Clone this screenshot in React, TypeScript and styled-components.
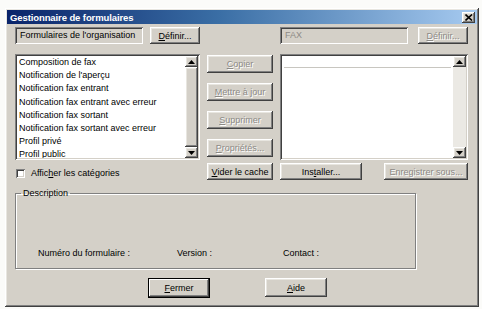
import styled, { createGlobalStyle } from "styled-components";

const GlobalStyle = createGlobalStyle`
  html, body {
    margin: 0;
    padding: 0;
    background: #fbfbf9;
  }
  body {
    font-family: "Liberation Sans", Arial, sans-serif;
    font-size: 9px;
    color: #000;
  }
`;

const raised = `
  box-shadow: inset -1px -1px #404040, inset 1px 1px #ffffff,
    inset -2px -2px #808080, inset 2px 2px #e8e6e0;
`;

const sunken = `
  box-shadow: inset 1px 1px #808080, inset -1px -1px #ffffff,
    inset 2px 2px #404040, inset -2px -2px #d4d0c8;
`;

const Page = styled.div`
  padding: 8px 3px 2px 5px;
`;

const Window = styled.div`
  width: 474px;
  height: 299px;
  box-sizing: border-box;
  background: #d4d0c8;
  padding: 2px;
  ${raised}
  display: flex;
  flex-direction: column;
`;

const TitleBar = styled.div`
  height: 14px;
  flex-shrink: 0;
  display: flex;
  align-items: center;
  justify-content: space-between;
  padding: 0 2px 0 3px;
  background: linear-gradient(90deg, #0a246a 0%, #3a6ea5 45%, #a6caf0 100%);
`;

const Title = styled.span`
  color: #fff;
  font-weight: bold;
  font-size: 9.5px;
  letter-spacing: -0.1px;
`;

const CloseButton = styled.div`
  width: 13px;
  height: 11px;
  background: #d4d0c8;
  ${raised}
  display: flex;
  align-items: center;
  justify-content: center;
`;

const Content = styled.div`
  padding: 3px 8px 0 8px;
  display: grid;
  grid-template-columns: 185px 66px 188px;
  column-gap: 7px;
  grid-template-rows: auto auto auto;
`;

const Cell = styled.div<{ $mt?: number }>`
  display: flex;
  align-items: flex-start;
  margin-top: ${(p) => p.$mt ?? 0}px;
`;

const FieldRow = styled.div`
  display: flex;
  gap: 7px;
  width: 100%;
  justify-content: space-between;
`;

const Field = styled.div<{ $disabled?: boolean }>`
  width: 128px;
  height: 17px;
  box-sizing: border-box;
  padding: 3px 5px;
  background: #d4d0c8;
  ${sunken}
  color: ${(p) => (p.$disabled ? "#8c8a86" : "#000")};
  white-space: nowrap;
`;

const Button = styled.div<{ $w?: number; $disabled?: boolean; $default?: boolean; $h?: number }>`
  width: ${(p) => p.$w ?? 66}px;
  height: ${(p) => p.$h ?? 18}px;
  box-sizing: border-box;
  flex-shrink: 0;
  display: flex;
  align-items: center;
  justify-content: center;
  background: #d4d0c8;
  white-space: nowrap;
  ${(p) =>
    p.$default
      ? `border: 1px solid #000; box-shadow: inset -1px -1px #404040, inset 1px 1px #ffffff, inset -2px -2px #808080;`
      : raised}
  color: ${(p) => (p.$disabled ? "#8c8a86" : "#000")};
  text-shadow: ${(p) => (p.$disabled ? "1px 1px #ffffff" : "none")};
  u {
    text-decoration: underline;
  }
`;

const ButtonStack = styled.div`
  display: flex;
  flex-direction: column;
  gap: 10px;
  padding-top: 1px;
`;

const ListBox = styled.div`
  width: 100%;
  height: 106px;
  box-sizing: border-box;
  padding: 2px;
  background: #fff;
  ${sunken}
  display: flex;
`;

const Items = styled.div`
  flex: 1;
  padding: 0 2px;
  overflow: hidden;
`;

const Item = styled.div`
  height: 13.2px;
  line-height: 13.2px;
  white-space: nowrap;
`;

const FocusRow = styled.div`
  height: 11px;
  border-bottom: 1px solid #c8c6c0;
`;

const ScrollBar = styled.div`
  width: 13px;
  display: flex;
  flex-direction: column;
  background: #ebe9e4;
`;

const ArrowButton = styled.div`
  height: 11px;
  flex-shrink: 0;
  background: #d4d0c8;
  ${raised}
  display: flex;
  align-items: center;
  justify-content: center;
`;

const Thumb = styled.div`
  flex: 1;
  background: #d4d0c8;
  ${raised}
`;

const Track = styled.div`
  flex: 1;
`;

const CheckRow = styled.label`
  display: flex;
  align-items: center;
  gap: 6px;
  padding: 5px 0 0 1px;
`;

const CheckBox = styled.span`
  width: 9px;
  height: 9px;
  background: #fff;
  ${sunken}
`;

const BottomRight = styled.div`
  display: flex;
  justify-content: space-between;
  width: 100%;
`;

const Group = styled.fieldset`
  margin: 8px 0 0 8px;
  width: 401px;
  height: 81px;
  box-sizing: border-box;
  border: 1px solid #808080;
  box-shadow: 1px 1px #ffffff, inset 1px 1px #ffffff;
  padding: 0 22px;
  legend {
    padding: 0 2px;
    margin-left: -17px;
  }
`;

const InfoRow = styled.div`
  display: flex;
  margin-top: 50px;
`;

const Info = styled.span<{ $w: number }>`
  width: ${(p) => p.$w}px;
`;

const Footer = styled.div`
  display: flex;
  gap: 55px;
  padding: 9px 0 0 141px;
`;

const Arrow = ({ up }: { up?: boolean }) => (
  <svg width="7" height="4" viewBox="0 0 7 4">
    <path d={up ? "M3.5 0 L7 4 L0 4 Z" : "M0 0 L7 0 L3.5 4 Z"} fill="#000" />
  </svg>
);

const items = [
  "Composition de fax",
  "Notification de l'aperçu",
  "Notification fax entrant",
  "Notification fax entrant avec erreur",
  "Notification fax sortant",
  "Notification fax sortant avec erreur",
  "Profil privé",
  "Profil public",
];

export default function App() {
  return (
    <>
      <GlobalStyle />
      <Page>
        <Window>
          <TitleBar>
            <Title>Gestionnaire de formulaires</Title>
            <CloseButton>
              <svg width="8" height="7" viewBox="0 0 8 7">
                <path d="M0.5 0.5 L7 6.5 M7 0.5 L0.5 6.5" stroke="#000" strokeWidth="1.6" />
              </svg>
            </CloseButton>
          </TitleBar>
          <Content>
            <Cell>
              <FieldRow>
                <Field>Formulaires de l'organisation</Field>
                <Button $w={50} $h={17}>
                  <span><u>D</u>éfinir...</span>
                </Button>
              </FieldRow>
            </Cell>
            <Cell />
            <Cell>
              <FieldRow>
                <Field $disabled>FAX</Field>
                <Button $w={50} $h={17} $disabled>
                  <span><u>D</u>éfinir...</span>
                </Button>
              </FieldRow>
            </Cell>

            <Cell $mt={10}>
              <ListBox>
                <Items>
                  {items.map((t) => (
                    <Item key={t}>{t}</Item>
                  ))}
                </Items>
                <ScrollBar>
                  <ArrowButton><Arrow up /></ArrowButton>
                  <Thumb />
                  <ArrowButton><Arrow /></ArrowButton>
                </ScrollBar>
              </ListBox>
            </Cell>
            <Cell $mt={10}>
              <ButtonStack>
                <Button $disabled><span><u>C</u>opier</span></Button>
                <Button $disabled><span><u>M</u>ettre à jour</span></Button>
                <Button $disabled><span><u>S</u>upprimer</span></Button>
                <Button $disabled><span><u>P</u>ropriétés...</span></Button>
              </ButtonStack>
            </Cell>
            <Cell $mt={10}>
              <ListBox>
                <Items>
                  <FocusRow />
                </Items>
                <ScrollBar>
                  <ArrowButton><Arrow up /></ArrowButton>
                  <Track />
                  <ArrowButton><Arrow /></ArrowButton>
                </ScrollBar>
              </ListBox>
            </Cell>

            <Cell $mt={3}>
              <CheckRow>
                <CheckBox />
                <span>Affic<u>h</u>er les catégories</span>
              </CheckRow>
            </Cell>
            <Cell $mt={3}>
              <Button $h={17}><span><u>V</u>ider le cache</span></Button>
            </Cell>
            <Cell $mt={3}>
              <BottomRight>
                <Button $w={82} $h={17}><span>Ins<u>t</u>aller...</span></Button>
                <Button $w={84} $h={17} $disabled><span>Enre<u>g</u>istrer sous...</span></Button>
              </BottomRight>
            </Cell>
          </Content>
          <Group>
            <legend>Description</legend>
            <InfoRow>
              <Info $w={139}>Numéro du formulaire :</Info>
              <Info $w={106}>Version :</Info>
              <Info $w={100}>Contact :</Info>
            </InfoRow>
          </Group>
          <Footer>
            <Button $w={62} $h={20} $default><span><u>F</u>ermer</span></Button>
            <Button $w={62} $h={19}><span><u>A</u>ide</span></Button>
          </Footer>
        </Window>
      </Page>
    </>
  );
}
